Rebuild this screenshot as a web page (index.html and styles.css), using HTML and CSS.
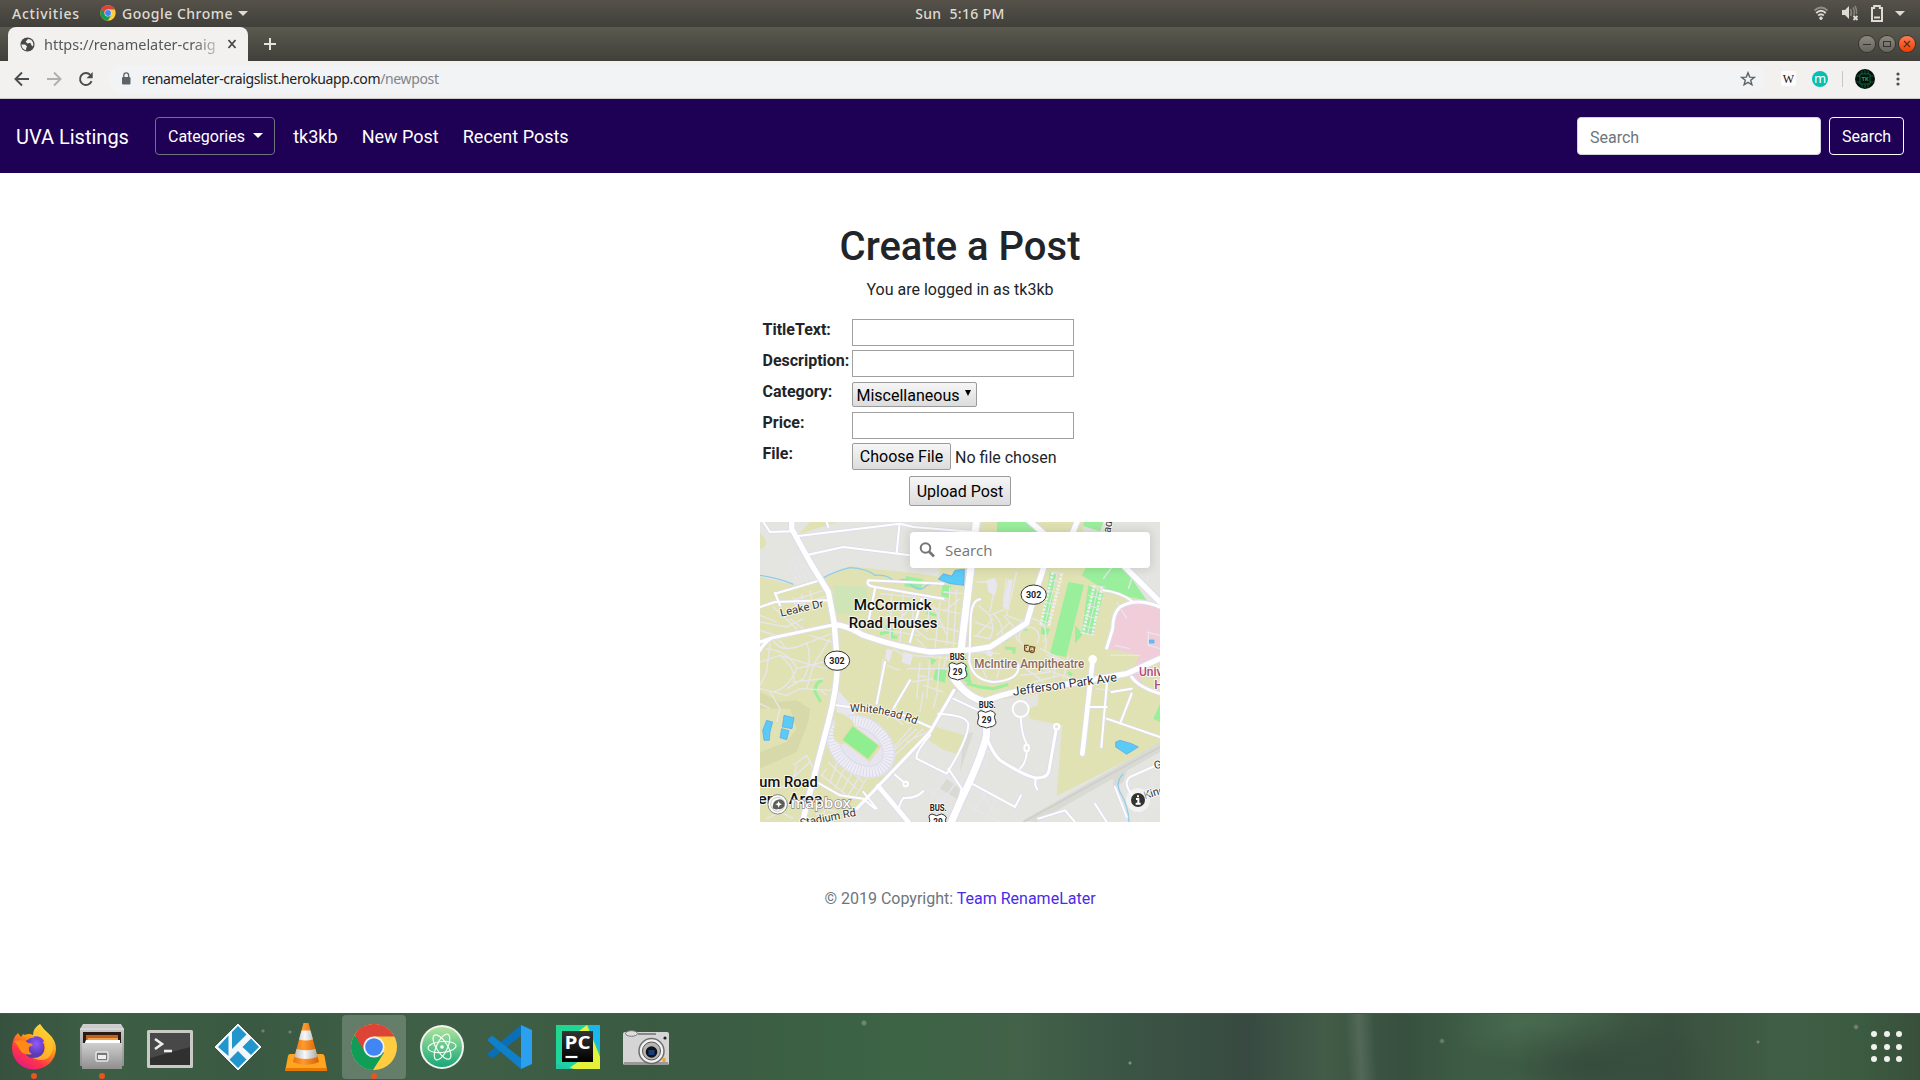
FILE: index.html
```html
<!DOCTYPE html>
<html lang="en">
<head>
<meta charset="utf-8">
<title>UVA Listings</title>
<link rel="stylesheet" href="styles.css">
</head>
<body>
<svg width="0" height="0" class="defs" aria-hidden="true">
  <defs>
    <symbol id="chrome" viewBox="0 0 48 48">
      <circle cx="24" cy="24" r="23" fill="#ffcd40"/>
      <path d="M24 24 4.1 12.5A23 23 0 0 0 23 47L34 29.7z" fill="#0f9d58"/>
      <path d="M24 13.5H44.5A23 23 0 0 0 4.6 11.7L15 29.5z" fill="#db4437"/>
      <circle cx="24" cy="24" r="10.6" fill="#f1f1f1"/>
      <circle cx="24" cy="24" r="8.8" fill="#4285f4"/>
    </symbol>
  </defs>
</svg>

<header class="topbar">
  <div class="top-left">
    <span class="activities">Activities</span>
    <svg class="top-chrome" width="16" height="16"><use href="#chrome"/></svg>
    <span class="appname">Google Chrome</span>
    <i class="caret"></i>
  </div>
  <div class="clock">Sun&nbsp; 5:16 PM</div>
  <div class="tray">
    <svg width="16" height="16" viewBox="0 0 16 16" fill="none" stroke="#dfdbd2" stroke-width="1.8"><path d="M1.5 5.5Q8-.5 14.500 5.500" opacity=".45"/><path d="M3.200 8Q8 3.500 12.800 8M5.200 10.500Q8 8 10.800 10.500"/><circle cx="8" cy="13.200" r="1.300" fill="#dfdbd2" stroke-width="1"/></svg>
    <svg width="18" height="16" viewBox="0 0 18 16"><path d="M1 5h3l4-4v13l-4-4H1z" fill="#dfdbd2"/><path d="M9.500 4q2 3.500 0 7M12 2.500q2.500 4 .500 8M14 1q2 3 1.500 8" fill="none" stroke="#dfdbd2" stroke-width="1.500" opacity=".4"/><path d="m12.500 11 4 4m0-4-4 4" stroke="#dfdbd2" stroke-width="1.800"/></svg>
    <svg width="12" height="17" viewBox="0 0 12 17"><path d="M1 3h2.200V1h5.600v2H11v13H1z" fill="none" stroke="#dfdbd2" stroke-width="2"/><path d="M3 12.500h6" stroke="#dfdbd2" stroke-width="2"/></svg>
    <i class="caret"></i>
  </div>
</header>

<div class="tabstrip">
  <div class="tab">
    <svg width="15" height="15" viewBox="0 0 16 16"><circle cx="8" cy="8" r="7.500" fill="#454748"/><path d="M1.500 8h4l2 2-1 2v2.200C3.500 13.500 1.500 11 1.500 8M8.500 2 6 5l2 2 3-1 2 4 1.300-1.500C14.500 5 12 2 8.500 2" fill="#f2f1f0"/></svg>
    <span class="tab-title">https://renamelater-craig</span>
    <svg class="tab-x" width="10" height="10" viewBox="0 0 10 10"><path d="m1.500 1 7 8m0-8-7 8" stroke="#454748" stroke-width="1.800"/></svg>
  </div>
  <svg class="newtab" width="14" height="14" viewBox="0 0 14 14"><path d="M7 1v12M1 7h12" stroke="#e4e2dc" stroke-width="2"/></svg>
  <div class="winbtns">
    <span class="wb"><i class="wb-min"></i></span>
    <span class="wb"><i class="wb-max"></i></span>
    <span class="wb wb-close"><svg width="8" height="8" viewBox="0 0 8 8"><path d="m1 1 6 6m0-6-6 6" stroke="#5b2d15" stroke-width="1.300"/></svg></span>
  </div>
</div>

<div class="toolbar">
  <svg class="nav-ic" width="16" height="16" viewBox="0 0 16 16" fill="none" stroke="#4b4c4e" stroke-width="1.900"><path d="M15 8H2.200M8 1.500 1.500 8 8 14.500"/></svg>
  <svg class="nav-ic" width="16" height="16" viewBox="0 0 16 16" fill="none" stroke="#b0afae" stroke-width="1.900"><path d="M1 8h12.800M8 1.500 14.500 8 8 14.500"/></svg>
  <svg class="nav-ic" width="16" height="16" viewBox="0 0 16 16"><path d="M13.600 10.200A6 6 0 1 1 12.300 3.800" fill="none" stroke="#4b4c4e" stroke-width="1.900"/><path d="M14.700 1v6.200H8.500z" fill="#4b4c4e"/></svg>
  <div class="omnibox">
    <svg width="10" height="13" viewBox="0 0 10 13"><rect x="1" y="5" width="8.500" height="7.500" rx="1" fill="#5f6368"/><path d="M2.800 5.500V3.200a2.400 2.400 0 0 1 4.800 0v2.300" fill="none" stroke="#5f6368" stroke-width="1.300"/></svg>
    <span class="url"><b>renamelater-craigslist.herokuapp.com</b>/newpost</span>
    <svg class="star" width="16" height="16" viewBox="0 0 16 16"><path d="m8 1.800 1.700 4.300 4.600.300-3.600 2.900 1.200 4.500L8 11.300l-3.900 2.500 1.200-4.500L1.700 6.400l4.600-.300z" fill="none" stroke="#5f6368" stroke-width="1.400"/></svg>
  </div>
  <div class="exts">
    <span class="ext-w">W</span>
    <span class="ext-m">m</span>
    <i class="sep"></i>
    <svg width="20" height="20" viewBox="0 0 20 20"><circle cx="10" cy="10" r="10" fill="#03100b"/><path d="M5 5h10v10H5zM7 5V1.500M10 5V1M13 5V1.500M7 15v3.500M10 15v4M13 15v3.500M5 7H1.500M5 13H1.500M15 7h3.500M15 13h3.500" fill="none" stroke="#0d6b3c" stroke-width=".9"/><text x="10" y="12.300" text-anchor="middle" class="tk">TK</text></svg>
    <svg width="4" height="14" viewBox="0 0 4 14" fill="#4b4c4e"><circle cx="2" cy="2" r="1.600"/><circle cx="2" cy="7" r="1.600"/><circle cx="2" cy="12" r="1.600"/></svg>
  </div>
</div>

<main class="page">
  <nav class="navbar">
    <a class="brand">UVA Listings</a>
    <button class="btn btn-cat">Categories<i></i></button>
    <a class="link">tk3kb</a>
    <a class="link">New Post</a>
    <a class="link">Recent Posts</a>
    <div class="nav-search">
      <input class="nav-input" type="text" placeholder="Search">
      <button class="btn btn-search">Search</button>
    </div>
  </nav>

  <section class="create">
    <h1>Create a Post</h1>
    <p class="who">You are logged in as tk3kb</p>
    <form class="form">
      <label>TitleText:</label><input class="txt" type="text">
      <label>Description:</label><input class="txt" type="text">
      <label>Category:</label><div class="select">Miscellaneous<svg width="6" height="6" viewBox="0 0 6 6"><path d="M0 0h6L3 6z"/></svg></div>
      <label>Price:</label><input class="txt" type="text">
      <label>File:</label><div class="file"><button type="button" class="gbtn">Choose File</button><span>No file chosen</span></div>
    </form>
    <button class="gbtn upload">Upload Post</button>

    <div class="map">
      <svg width="400" height="300" viewBox="0 0 1200 900">
        <defs>
          <g id="rd22"><path d="M650-10 603 385M582 470Q625 530 680 540L680 640Q660 720 600 840L570 910"/></g>
          <g id="rd18"><path d="M95-10V20L150 120 205 210 222 300 232 420Q232 500 205 600L150 810 125 910M225 308Q260 310 310 340 420 378 510 390L640 383 690 375 800 303 830 200 850 140M680 535Q770 500 900 490L1100 455 1200 410M1080 120 1200 240M800-10 870 50M955-10 935 40"/></g>
          <g id="rd14"><path d="M998 412 990 490 967 695M355 793 445 900"/></g>
          <g id="rd9"><path d="M0 385Q10 365 35 348L215 310M0 360 35 348M1115 465Q1135 495 1200 515M582 505 510 630 290 860M1200 255Q1130 225 1080 255 1058 275 1058 320L1040 378M670 605Q685 680 720 715 800 765 830 768 860 768 866 750L890 614"/></g>
          <g id="rd6"><path d="M10 0 30 30 100 28M115 42 420 5 460 15 640 30M200 0 205 15M145 98 250 75 450 100M418 10 410 92M45 215 170 178M45 213 60 250M0 255 45 240 200 235M230 550 420 575 510 615M375 420 350 545M450 475 400 560M345 200 325 300M550 185 325 175Q315 190 345 195L550 230M485 230 450 360M660 232Q635 235 632 290L628 420Q640 475 700 480 780 475 775 430M535 575Q620 580 625 605 625 650 560 755L470 710Q465 690 510 640M580 530 655 565M782 585Q785 640 800 665M800 690Q800 720 780 740M826 768V790L832 803M437 785 405 758M490 807Q470 830 430 828 415 850 415 870M565 740 605 800M636 785 765 855 783 820M605 800 590 860M1042 470 1024 675M1115 515 1080 605M1040 590 1200 645M1055 510 1115 500M985 555H1040M1200 725 1110 765Q1090 780 1110 810L1130 835M1065 795 1100 885M835 890 915 865 945 900M1005 845 1040 900M1030 205Q1080 210 1120 240M170 780 240 820 310 830 345 860M310 810 350 860"/></g>
        </defs>
        <rect width="1200" height="900" fill="#e4e4e0"/>
        <path d="M0 165 100 190 185 170 270 133 480 155 535 165 540 138H1000L1200 260V665L890 822 906 610 810 590 805 560 835 550V515L700 535 595 505 540 575 500 645 240 900H0zM0 30 20 60 10 80H0zM665 0H970V60H655zM150 0H230L115 38z" fill="#e1e2b3"/>
        <path d="M0 510 60 540 110 535 150 560 145 600 110 690 0 740V690L80 660 110 620 90 560 0 560z" fill="#d8d9aa"/>
        <path d="M520 612 612 640 595 697 550 683 500 650z" fill="#e1e2b3"/>
        <path d="M610 640 640 630 600 750 605 700zM790 895 1200 660V690L830 900zM1060 750 1100 745 1090 780 1060 800zM560 770 600 800 590 830 540 800z" fill="#dadad5"/>
        <path d="M790 900 1200 675" stroke="#cfcfca" stroke-width="5"/>
        <path d="M220 190 320 195 325 270 280 275H225z" fill="#cfe4b7"/>
        <path d="M1040 378 1058 320V275Q1080 245 1130 238L1200 258V415L1140 460 1150 500 1125 490 1115 450 1140 400z" fill="#f0cdd9"/>
        <path d="M438 162 490 172 484 203 433 192zM548 187 574 193 568 228 543 222zM711 0H815L845 32H711zM970 0H1030L1020 28 970 12zM925 180 972 188 918 405 870 395zM985 125H1085L1160 235 1110 225 1045 210 965 160zM527 437 560 445 555 482 520 473zM620 420 636 485 612 478zM845 315 870 322 862 340 842 335zM945 310 970 335 945 365zM870 150 890 160 862 310 845 300zM985 190 1030 215 1000 340 965 330zM1200 545 1180 590 1200 600zM505 405 530 415 515 430zM730 350 745 355 715 368zM795 312 805 325 770 328z" fill="#9aef9c"/>
        <path d="M188 475Q165 480 165 510L182 540M620 485 660 495 700 500 745 487M735 378 762 380V395M395 320V345L412 345M500 272 530 280M925 450 935 460M360 335 385 330 380 310" fill="none" stroke="#9aef9c" stroke-width="9"/>
        <path d="M0 160Q60 170 100 187M185 170Q230 145 270 137 320 140 345 160 385 155 405 182 435 160 455 190 480 212 500 190 530 180 535 190M1090 755Q1065 780 1080 810 1105 850 1107 900" fill="none" stroke="#8fcdea" stroke-width="4"/>
        <g fill="#5acbf6" stroke="#5a9ff0" stroke-width="2"><path d="M535 172 550 155 575 162 585 145 613 142 612 190 570 185zM72 580 102 587 96 620 67 615zM65 620 87 626 80 653 60 647zM20 595 38 600 30 630 28 655 12 655 8 625zM1067 660 1080 655 1115 665 1135 675 1100 697 1067 675zM1167 354H1182V363H1167z"/></g>

        <g class="lav" stroke-width="4">
          <path d="M85 120 115 190M98 115 128 187M112 110 142 182M85 120 112 110M128 125 155 170M100 225 110 270M125 215 135 260M150 205 160 250M100 235 190 205M105 250 195 225M0 300 80 315 130 290M0 325 60 345 140 330M40 255 110 320 100 340M90 290 130 320M0 280 50 300M40 355Q60 390 110 375 150 360 215 335M20 380Q90 390 110 440 85 500 40 510M0 420 60 400 140 425 200 440M30 365 20 450 0 490M140 360Q160 420 130 470L80 500M60 400Q110 440 100 480L190 470M0 500 80 520 120 500 215 505M110 440 190 420M30 510 60 560 50 600M0 545 30 560M45 340 80 380M150 340 215 360M210 350 160 430 140 500M175 500 200 520"/>
          <path d="M395 215 390 350M430 215 420 360M465 220 455 310M510 235 500 330M540 240 525 380M360 245 480 265M370 285 520 300M340 320 480 340M480 250 600 275M550 270 600 230M570 195 560 370M590 200 580 380M600 270 630 275M530 310 600 330M500 350 590 365M520 250 560 340M440 300 500 350M400 310 440 270M550 210 610 215M360 215 560 235"/>
          <path d="M655 250 690 280 740 260M700 275Q740 310 720 370M645 300 700 320 690 280M640 340 690 350 700 320M730 280 775 330M700 290 650 340M750 300 710 340M740 170 730 240M770 150 740 280 790 300M690 180 650 180M700 215 690 270M655 390 720 395M640 440 700 440 770 435M830 365A30 30 0 1 0 790 370M850 360A45 45 0 1 0 775 360M840 380 900 410M860 400 960 430M770 420 840 470M800 440 850 480M850 440 960 480M720 430 710 470M670 445 680 470M780 460 870 450M820 480 900 460M890 410 880 470M925 400 910 470M860 350 855 385"/>
          <path d="M450 400 590 410M440 440 570 440M480 420 470 530M510 410 500 530M540 400 530 520M400 380 430 400M370 410 355 520M455 480 520 470M380 430 420 445M490 490 550 510M470 460 500 465M560 400 550 440M490 510 480 570M530 520 520 560M470 350 500 380"/>
          <path d="M390 575 430 610M405 570 445 605M425 575 470 605M440 660 510 625M360 740 490 620M370 715 470 620M380 700 455 615M345 750 400 720M410 560 380 590M200 740 185 760 260 820M205 720 290 800M215 700 310 780M240 700 210 780M260 725 225 800M280 745 245 810M300 760 265 820M320 770 285 825M100 730 140 700 160 740M95 770 150 720M60 800 100 770 110 730M20 890 60 870 100 890M180 820 170 880M200 830 190 890M160 850 230 870"/>
          <path d="M640 700 680 720 670 735M565 760 510 830M590 780 530 860M500 800 560 850M640 790 600 860M680 810 640 870M710 825 680 890M660 800 700 870M620 850 720 900M540 750 600 790M650 680 690 690"/>
          <path d="M1065 370 1110 380M1050 400 1140 400M1160 330 1200 340M1165 330V370L1200 380M1115 170 1105 200M1170 150 1155 190M940 60V110M1070 240 1100 290M1060 130 1030 170M1010 500 1050 505M1170 760 1180 800M1180 840 1140 870 1150 900"/>
        </g>
        <g fill="#e8e7f0"><path d="M680 175 705 168 712 190 705 220 685 210zM745 172 758 175 742 262 728 255zM380 380 398 385 388 420 375 410zM430 390 460 398 450 430 425 420zM230 500 270 545 290 590 230 570zM675 375 700 390 695 405 680 400z"/></g>
        <g class="blocks"><path d="M878 152 842 310M905 156 866 312M1003 190 968 338M1026 195 997 340"/></g>
        <g class="lav" stroke-width="3"><path d="M872 150 912 155M870 175 910 180M862 205 900 212M855 240 890 250M848 270 882 280M840 295 875 305M990 190 1035 195M985 220 1030 230M980 250 1020 260M970 280 1012 290M965 310 1005 320M960 330 1000 340M891 155 854 310M1015 193 982 340"/></g>

        <g transform="rotate(37 303 668)">
          <ellipse cx="306" cy="672" rx="112" ry="86" fill="#e5e4ef"/>
          <ellipse cx="306" cy="672" rx="92" ry="68" fill="none" stroke="#eeedf5" stroke-width="32"/>
          <ellipse cx="306" cy="672" rx="92" ry="68" fill="none" stroke="#d6d5e3" stroke-width="30" stroke-dasharray="2 7"/>
          <ellipse cx="306" cy="672" rx="108" ry="84" fill="none" stroke="#dcdbe9" stroke-width="3"/>
          <ellipse cx="306" cy="672" rx="74" ry="50" fill="none" stroke="#dcdbe9" stroke-width="3"/>
          <path d="M190 640Q235 610 260 640V700Q230 715 215 690z" fill="#e1e2b3"/>
          <rect x="243" y="636" width="112" height="58" fill="#e3dfae"/>
          <rect x="250" y="639" width="96" height="50" fill="#8fef90"/>
        </g>

        <g class="case"><use href="#rd6" stroke-width="10"/><use href="#rd9" stroke-width="14"/><use href="#rd14" stroke-width="19"/><use href="#rd18" stroke-width="22"/><use href="#rd22" stroke-width="27"/></g>
        <g class="road"><use href="#rd6" stroke-width="6"/><use href="#rd9" stroke-width="9"/><use href="#rd14" stroke-width="14"/><use href="#rd18" stroke-width="16"/><use href="#rd22" stroke-width="21"/></g>
        <circle cx="998" cy="412" r="13" fill="#fff"/>
        <g fill="#e4e4e0" stroke="#fff" stroke-width="6"><circle cx="782" cy="561" r="24"/><circle cx="890" cy="614" r="8"/><ellipse cx="800" cy="678" rx="7" ry="10"/><circle cx="437" cy="786" r="7"/></g>

        <g class="shield">
          <ellipse cx="821" cy="218" rx="38" ry="29"/><ellipse cx="231" cy="416" rx="38" ry="29"/>
          <g id="us29"><path d="M567 430Q566 424 576 422L590 427 604 422Q614 423 619 432 613 442 619 451 625 462 611 469 600 471 593 474 586 471 575 469 562 464 567 451 572 442 567 430z"/></g>
          <use href="#us29" x="87" y="144"/><use href="#us29" x="-60" y="454"/>
        </g>
        <g class="num">
          <text x="821" y="227" textLength="46" lengthAdjust="spacingAndGlyphs">302</text><text x="231" y="425" textLength="46" lengthAdjust="spacingAndGlyphs">302</text>
          <text x="593" y="458" textLength="29">29</text><text x="680" y="603" textLength="29">29</text><text x="534" y="910" textLength="29">29</text>
          <text x="595" y="413" textLength="51" lengthAdjust="spacingAndGlyphs">BUS.</text><text x="682" y="557" textLength="51" lengthAdjust="spacingAndGlyphs">BUS.</text><text x="535" y="866" textLength="51" lengthAdjust="spacingAndGlyphs">BUS.</text>
        </g>
        <g class="place">
          <text x="281" y="264" textLength="234" lengthAdjust="spacingAndGlyphs">McCormick</text><text x="266" y="318" textLength="266" lengthAdjust="spacingAndGlyphs">Road Houses</text>
          <text x="-2" y="794" textLength="175" lengthAdjust="spacingAndGlyphs">um Road</text><text x="-6" y="847" textLength="194" lengthAdjust="spacingAndGlyphs">ena Area</text>
        </g>
        <g class="street">
          <path id="wh" d="M270 570Q370 565 480 613" fill="none" stroke="none"/>
          <text transform="translate(63 284) rotate(-13)" textLength="132" lengthAdjust="spacingAndGlyphs">Leake Dr</text>
          <text><textPath href="#wh" textLength="203" lengthAdjust="spacingAndGlyphs">Whitehead Rd</textPath></text>
          <text class="big" transform="translate(760 521) rotate(-8)" textLength="315" lengthAdjust="spacingAndGlyphs">Jefferson Park Ave</text>
          <text transform="translate(122 914) rotate(-11)" textLength="170" lengthAdjust="spacingAndGlyphs">Stadium Rd</text>
          <text transform="translate(1051 34) rotate(-80)">ad</text>
          <text transform="translate(1184 742) rotate(-12)">G</text>
          <text transform="translate(1155 832) rotate(-18)">King</text>
        </g>
        <text x="643" y="438" class="poi" textLength="330" lengthAdjust="spacingAndGlyphs">McIntire Ampitheatre</text>
        <text x="1137" y="461" class="hosp">Univ</text><text x="1183" y="502" class="hosp">H</text>
        <g fill="none" stroke="#7a4b27" stroke-width="4"><path d="M806 370H794V385Q798 390 806 388M810 373 824 376 822 389Q815 395 808 387zM798 376H801M813 379H814M819 380H820M812 386H818"/></g>

        <g transform="translate(53 847)">
          <circle r="29" fill="#fff" stroke="#55564f" stroke-width="2"/><circle r="21" fill="none" stroke="#aaa" stroke-width="2"/>
          <path d="M-15 12Q-16-10 0-14A15 15 0 1 1 2 14Q-6 17-15 12z" fill="#5d5d5a"/><path d="m3-10 3 7 7 3-7 3-3 7-3-7-7-3 7-3z" fill="#fff"/>
        </g>
        <text x="92" y="859" class="mbx" textLength="181" lengthAdjust="spacingAndGlyphs">mapbox</text>
        <circle cx="1134" cy="834" r="36" fill="#fff" opacity=".5"/><circle cx="1134" cy="834" r="21" fill="#333"/>
        <path d="M1134 820v6M1128 831h7v14m-8 0h15" stroke="#fff" stroke-width="6" fill="none"/>
      </svg>
      <div class="geocoder">
        <svg width="16" height="16" viewBox="0 0 16 16" fill="none" stroke="#757575" stroke-width="2"><circle cx="6.500" cy="6" r="4.800"/><path d="m10 9.500 5 5" stroke-width="2.600"/></svg>
        <span>Search</span>
      </div>
    </div>
  </section>
  <footer class="foot">© 2019 Copyright: <a>Team RenameLater</a></footer>
</main>

<div class="dock">
  <div class="app running">
    <svg width="48" height="48" viewBox="0 0 48 48">
      <defs><linearGradient id="ff" x1=".8" y1="0" x2=".2" y2="1"><stop offset="0" stop-color="#fff44f"/><stop offset=".4" stop-color="#ff980e"/><stop offset=".7" stop-color="#ff3647"/><stop offset="1" stop-color="#e31587"/></linearGradient><radialGradient id="fp" cx=".6" cy=".3"><stop offset="0" stop-color="#9059ff"/><stop offset="1" stop-color="#5b3bb5"/></radialGradient></defs>
      <path d="M30 1Q34 7 38 10 46 17 46 26A22 21 0 0 1 2 25Q2 15 8 10L11 14Q14 9 14 12 20 10 23 12 23 5 30 1z" fill="url(#ff)"/>
      <circle cx="24" cy="25" r="10.500" fill="url(#fp)"/>
      <path d="M4 18Q14 16 18 20 22 20 23 22L19 24Q18 29 22 31 14 33 10 27 8 22 4 18z" fill="#ff8a16"/><path d="M24 15Q36 13 35 25 34 35 22 35 40 42 43 25 42 16 35 11L30 1Q22 8 24 15z" fill="#ffc832" opacity=".75"/>
      <path d="M24 15Q30 14 33 19" stroke="#7542e5" stroke-width="3" fill="none"/>
    </svg>
  </div>
  <div class="app running">
    <svg width="48" height="48" viewBox="0 0 48 48">
      <defs><linearGradient id="gr" x2="0" y2="1"><stop offset="0" stop-color="#cfcfcf"/><stop offset="1" stop-color="#8f8f8f"/></linearGradient></defs>
      <path d="M5 1h38l3 5v37H2V6z" fill="url(#gr)"/><path d="M2 6h44" stroke="#e5e5e5"/><path d="M5 9h38v12H5z" fill="#2b1a12"/><path d="M8 12h32v9H8z" fill="#c05f1e"/><path d="M10 15h30v6H8z" fill="#f0a04a"/><path d="M8 17h34v5H6z" fill="#fff"/><path d="M4 20h40v26H4z" fill="url(#gr)"/><rect x="18" y="29" width="12" height="9" rx="1.500" fill="#777" stroke="#e8e8e8" stroke-width="1.500"/><path d="M20 32h8v4h-8z" fill="#eee"/>
    </svg>
  </div>
  <div class="app">
    <svg width="48" height="48" viewBox="0 0 48 48"><rect x="1" y="7" width="46" height="38" rx="1.500" fill="#c9c9c6"/><rect x="4" y="10" width="40" height="32" fill="#303030"/><path d="M4 10h40v14L4 35z" fill="#484848"/><path d="m9 16 7 5-7 5" fill="none" stroke="#eee" stroke-width="2.600"/><path d="M18 28h8" stroke="#eee" stroke-width="2.600"/></svg>
  </div>
  <div class="app">
    <svg width="48" height="48" viewBox="0 0 48 48"><path d="M24 1 47 24 24 47 1 24z" fill="#f4f6f7" stroke="#f4f6f7" stroke-linejoin="round"/><path d="M24 3 32.500 11.500 18 26V9zM14.500 12.500V33L4 24zM37 15.500 45 24 37 32 28.500 24zM24 28 32.500 36.500 24 45 15.500 36.500z" fill="#2196cc"/></svg>
  </div>
  <div class="app">
    <svg width="48" height="48" viewBox="0 0 48 48"><defs><linearGradient id="co"><stop offset="0" stop-color="#e8700a"/><stop offset=".4" stop-color="#ff9a2e"/><stop offset="1" stop-color="#d65f04"/></linearGradient><linearGradient id="cw"><stop offset="0" stop-color="#bbb"/><stop offset=".45" stop-color="#f8f8f8"/><stop offset="1" stop-color="#aaa"/></linearGradient></defs>
      <path d="M8 31h32q2 0 2.500 2L45 47Q45 48 43 48H5Q3 48 3.500 46L6 33Q6.500 31 8 31z" fill="#ffa51f"/><path d="M4 45h41v3H3z" fill="#e67a00"/><path d="M21.500 0h5L37 39Q24 45 11 39z" fill="url(#co)"/><path d="M19.500 7.500h9l2.500 9Q24 18.500 17 16.500zM14.500 26Q24 28.500 33.500 26L35.500 34Q24 38 12.500 34z" fill="url(#cw)"/></svg>
  </div>
  <div class="app active running"><svg width="48" height="48"><use href="#chrome"/></svg></div>
  <div class="app">
    <svg width="48" height="48" viewBox="0 0 48 48"><defs><linearGradient id="at" x2="0" y2="1"><stop offset="0" stop-color="#aee39d"/><stop offset="1" stop-color="#18a878"/></linearGradient></defs><circle cx="24" cy="24" r="22" fill="#f3f3ef"/><circle cx="24" cy="24" r="20" fill="url(#at)"/><g fill="none" stroke="#f2fff4" stroke-width="1.200"><ellipse cx="24" cy="24" rx="14" ry="5.500" transform="rotate(-5 24 24)"/><ellipse cx="24" cy="24" rx="14" ry="5.500" transform="rotate(57 24 24)"/><ellipse cx="24" cy="24" rx="14" ry="5.500" transform="rotate(115 24 24)"/></g><circle cx="24" cy="24" r="1.800" fill="#fff"/></svg>
  </div>
  <div class="app">
    <svg width="48" height="48" viewBox="0 0 48 48"><path d="M35 2v11L6 35.500 2 32v-2z" fill="#0b6fb8"/><path d="M35 46V35L6 12.500 2 16v2z" fill="#1180ca"/><path d="M35 2 46 7v34l-11 5z" fill="#2ba0ee"/><path d="M35 13v22L21 24z" fill="#3d5c44"/></svg>
  </div>
  <div class="app">
    <svg width="48" height="48" viewBox="0 0 48 48"><defs><linearGradient id="pc" y2="1"><stop offset="0" stop-color="#20d78c"/><stop offset="1" stop-color="#1fd0b2"/></linearGradient><linearGradient id="pb" x2="0" y2="1"><stop offset="0" stop-color="#333"/><stop offset="1" stop-color="#000"/></linearGradient></defs><path d="M2 2h44v44H2z" fill="url(#pc)"/><path d="M25 8 33 2 46 34V46H14L28 36z" fill="#e5f23c"/><path d="M34 2H46V30z" fill="#18b7ee"/><path d="M2 40 20 46H2z" fill="#22c8a6"/><rect x="8" y="8" width="31" height="31" fill="url(#pb)"/><text x="10.500" y="26" class="pctext" textLength="26" lengthAdjust="spacingAndGlyphs">PC</text><path d="M11.500 34h12" stroke="#fff" stroke-width="2.200"/></svg>
  </div>
  <div class="app">
    <svg width="48" height="48" viewBox="0 0 48 48"><rect x="1" y="9" width="46" height="33" rx="2" fill="#d5d5d5"/><path d="M2 39h44v3H2z" fill="#999"/><ellipse cx="9.500" cy="10.500" rx="6" ry="2.800" fill="#ddd" stroke="#777"/><path d="M16 11h18" stroke="#888" stroke-width="2"/><circle cx="29.500" cy="28" r="12.500" fill="#f2f2f2" stroke="#6d6d6d" stroke-width="1.500"/><circle cx="29.500" cy="28" r="9" fill="#b5b5b5" stroke="#555"/><circle cx="29.500" cy="29" r="5.800" fill="#111"/><rect x="26.500" y="27" width="6" height="5" fill="#173d7d"/><circle cx="43" cy="15" r="1.600" fill="#222"/><rect x="40.500" y="35" width="3" height="4" fill="#f0a325"/></svg>
  </div>
  <div class="grid"><i></i><i></i><i></i><i></i><i></i><i></i><i></i><i></i><i></i></div>
</div>
</body>
</html>
```
FILE: styles.css
```css
* { box-sizing: border-box; }
body {
  margin: 0;
  width: 1920px;
  height: 1080px;
  overflow: hidden;
  display: flex;
  flex-direction: column;
  background: #fff;
  color: #212529;
  font: 16px/24px Roboto, sans-serif;
}
svg { display: block; flex: none; }
.defs { position: absolute; }
input, button { font: inherit; margin: 0; border-radius: 0; }

/* desktop top bar */
.topbar {
  flex: none;
  height: 27px;
  display: grid;
  grid-template-columns: 1fr auto 1fr;
  align-items: center;
  padding: 0 15px 1px 12px;
  background: linear-gradient(#56524a, #403f3a);
  color: #dfdbd2;
  font: 500 14px/25px "Noto Sans", sans-serif;
  white-space: nowrap;
}
.top-left, .tray { display: flex; align-items: center; }
.activities { width: 68px; letter-spacing: .75px; margin-right: 20px; }
.top-chrome { margin-right: 6px; }
.appname { width: 111px; letter-spacing: .5px; }
.caret { border: 5px solid transparent; border-top-color: #dfdbd2; border-bottom: 0; margin-left: 5px; }
.clock { letter-spacing: .35px; padding-left: 3px; }
.tray { justify-content: flex-end; gap: 12px; }
.tray .caret { margin-left: 0; }

/* browser */
.tabstrip {
  flex: none;
  height: 34px;
  display: flex;
  align-items: center;
  padding: 0 5px 0 8px;
  background: linear-gradient(#5b5a50, #403f39);
}
.tab {
  width: 240px;
  height: 34px;
  display: flex;
  align-items: center;
  padding: 0 11px 0 12px;
  border-radius: 8px 8px 0 0;
  background: #f2f1f0;
}
.tab-title {
  width: 176px;
  margin: -1px 0 0 9px;
  white-space: nowrap;
  color: #55585b;
  font: 14.500px/22px "Noto Sans", sans-serif;
  letter-spacing: -.02px;
  -webkit-mask-image: linear-gradient(90deg, #000 84%, rgba(0, 0, 0, .2));
  mask-image: linear-gradient(90deg, #000 84%, rgba(0, 0, 0, .2));
}
.tab-x { margin-left: auto; }
.newtab { margin-left: 15px; }
.winbtns { display: flex; gap: 4px; margin-left: auto; }
.wb {
  width: 16px;
  height: 16px;
  display: flex;
  align-items: center;
  justify-content: center;
  border-radius: 50%;
  background: linear-gradient(#8b897f, #65645d);
  box-shadow: 0 0 0 1px #35342f;
}
.wb-min { width: 8px; height: 1px; background: #33322e; }
.wb-max { width: 8px; height: 6px; border: 1px solid #33322e; }
.wb-close { background: linear-gradient(#ff7c53, #ee3d00); }

.toolbar {
  flex: none;
  height: 38px;
  display: flex;
  align-items: center;
  padding: 0 24px 2px 14px;
  background: #f2f1f0;
  border-bottom: 1px solid #c9c9cc;
}
.nav-ic { margin-right: 16px; }
.omnibox {
  flex: 1;
  height: 28px;
  display: flex;
  align-items: center;
  padding: 0 9px 0 13px;
  border-radius: 14px;
  margin-left: -2px;
  background: #f1f3f4;
}
.url { margin-left: 11px; color: #80868b; font: 14px/22px "Noto Sans", sans-serif; letter-spacing: -.36px; }
.url b { font-weight: 400; color: #202124; }
.star { margin-left: auto; }
.exts { display: flex; align-items: center; margin-left: 16px; }
.ext-w, .ext-m { text-align: center; }
.ext-w { width: 15px; height: 15px; background: #fcfcfc; font: 12px/16px "Liberation Serif", serif; color: #111; border-radius: 2px; }
.ext-m { width: 16px; height: 16px; margin-left: 16px; border-radius: 50%; background: #06bfb3; color: #fff; font: 13px/14px "Noto Sans", sans-serif; }
.sep { width: 1px; height: 16px; background: #c8c7c6; margin: 0 12px 0 14px; }
.exts svg:last-child { margin-left: 21px; margin-right: -4px; }
.tk { font: bold 6px "Liberation Mono", monospace; fill: #18a35e; }

/* site navbar */
.page { flex: none; height: 914px; }
.navbar { height: 74px; display: flex; align-items: center; padding: 0 16px; background: #1e0055; color: #fff; }
.brand { width: 139px; font-size: 20px; line-height: 30px; padding-top: 1px; }
.btn {
  height: 38px;
  padding: 1px 12px 0;
  border: 1px solid #fff;
  border-radius: 4px;
  background: transparent;
  color: #fff;
}
.btn-cat { width: 120px; border-color: #6c757d; display: flex; align-items: center; margin-right: 6px; }
.btn-cat i { border: 5px solid transparent; border-top-color: #fff; border-bottom: 0; margin: -3px 0 0 8px; }
.link { font-size: 18px; padding: 1px 11.900px 0 12.200px; white-space: nowrap; }
.nav-search { display: flex; gap: 8px; margin-left: auto; }
.nav-input { width: 244px; height: 38px; padding: 2px 12px 0; border: 1px solid #ced4da; border-radius: 4px; }
.nav-input::placeholder { color: #6c757d; opacity: 1; }
.btn-search { width: 75px; }

/* form */
.create { width: 400px; margin: 0 auto; display: flex; flex-direction: column; align-items: center; padding-top: 50px; }
h1 { margin: 0 0 7px; font-size: 40px; line-height: 48px; font-weight: 500; white-space: nowrap; }
.who { margin: 0 0 17px; }
.form {
  align-self: stretch;
  display: grid;
  grid-template-columns: 89.500px 222px;
  grid-auto-rows: 27px;
  row-gap: 4px;
  padding-left: 2.500px;
}
.form label { font-weight: 700; line-height: 22px; }
.txt { width: 222px; height: 27px; border: 1px solid #a0a0a0; background: #fff; }
.gbtn, .select { border: 1px solid #9b9b9b; border-radius: 2px; background: linear-gradient(#f6f6f6, #dcdcdc); color: #000; white-space: nowrap; }
.select { width: 125px; height: 25px; margin-top: 1px; padding-left: 3.500px; display: flex; align-items: center; line-height: 25px; padding-top: 1px; }
.select svg { margin: -4px 0 0 5.500px; }
.file { display: flex; align-items: center; white-space: nowrap; }
.gbtn { height: 27px; padding: 1px 0 0; line-height: 24px; }
.file .gbtn { width: 99px; }
.file span { margin-left: 4px; line-height: 27px; padding-top: 1px; }
.upload { width: 102px; height: 30px; margin: 6px 0 16px; }

/* map */
.map { position: relative; width: 400px; height: 300px; overflow: hidden; }
.geocoder {
  position: absolute;
  top: 10px;
  right: 10px;
  width: 240px;
  height: 36px;
  display: flex;
  align-items: center;
  gap: 10px;
  padding: 0 9px;
  border-radius: 4px;
  background: #fff;
  box-shadow: 0 0 10px 2px rgba(0, 0, 0, .1);
  color: #757575;
  font: 15px/24px "Open Sans", sans-serif;
}
.lav { fill: none; stroke: #e7e6ef; }
.blocks { fill: none; stroke: #f0eff6; stroke-width: 8; stroke-dasharray: 7 4; }
.case, .road { fill: none; stroke-linecap: round; stroke-linejoin: round; }
.case { stroke: #dddced; }
.road { stroke: #fff; }
.shield { fill: #fff; stroke: #333; stroke-width: 3; }
.num text { font: 700 25px Roboto, sans-serif; text-anchor: middle; fill: #222; stroke: #fff; stroke-width: 4; paint-order: stroke; }
.place text, .street text, .poi, .hosp { paint-order: stroke; stroke: rgba(255, 255, 255, .75); stroke-width: 6; stroke-linejoin: round; }
.place text { font: 500 43px Roboto, sans-serif; fill: #111; }
.street text { font: 400 33px Roboto, sans-serif; fill: #333; }
.street .big { font-size: 37px; }
.poi { font: 500 36px Roboto, sans-serif; fill: #8b6b5c; }
.hosp { font: 500 36px Roboto, sans-serif; fill: #b04a7c; }
.mbx { font: 500 45px "Noto Sans", sans-serif; fill: #fff; stroke: #888; stroke-width: 4; paint-order: stroke; }

.foot { margin-top: 65px; text-align: center; color: #6c757d; }
.foot a { color: #4a2ce8; }

/* dock */
.dock {
  flex: none;
  height: 67px;
  display: flex;
  padding-top: 1px;
  border-top: 1px solid #4a574b;
  background:
    radial-gradient(circle at 864px 9px, #708473 2px, transparent 3px),
    radial-gradient(circle at 1442px 27px, #6d7d70 1px, transparent 3px),
    radial-gradient(circle at 1758px 28px, #7d8179 1px, transparent 2px),
    radial-gradient(circle at 1856px 13px, #7d8179 1px, transparent 3px),
    radial-gradient(circle at 1130px 49px, #7d8d83 1px, transparent 2px),
    radial-gradient(circle at 263px 17px, #718173 1px, transparent 2px),
    radial-gradient(circle at 290px 18px, #718173 1px, transparent 2px),
    linear-gradient(87deg, transparent 70.100%, rgba(110, 125, 112, .45) 70.800%, transparent 71.600%),
    radial-gradient(ellipse 130px 50px at 1590px 52px, rgba(50, 68, 56, .7), transparent),
    radial-gradient(ellipse 90px 40px at 1540px 12px, rgba(80, 115, 85, .5), transparent),
    linear-gradient(90deg, #37513f 0, #3d5e44 5%, #3a5942 13%, #3f5f46 22%, #3b5a42 34%, #3c6445 47%, #436249 53%, #3b5645 58%, #384a41 65%, #425c48 69%, #37503f 73%, #42654a 79%, #3a503f 87%, #405e45 93%, #3b5b40 97%, #394f3b);
}
.app { position: relative; width: 64px; height: 64px; margin: 0 0 0 4px; padding: 8px; border-radius: 4px; }
.app:first-child { margin-left: 2px; }
.active { background: rgba(255, 255, 255, .2); }
.running::after {
  content: "";
  position: absolute;
  left: 29px;
  bottom: 0;
  width: 6px;
  height: 6px;
  border-radius: 50%;
  background: #e95420;
}
.pctext { font: 700 18px "Open Sans", sans-serif; fill: #fff; }
.grid { display: grid; grid-template-columns: repeat(3, 6px); grid-auto-rows: 6px; gap: 6.500px; margin: 16px 18px 0 auto; }
.grid i { border-radius: 50%; background: #f1f1ee; }
```
